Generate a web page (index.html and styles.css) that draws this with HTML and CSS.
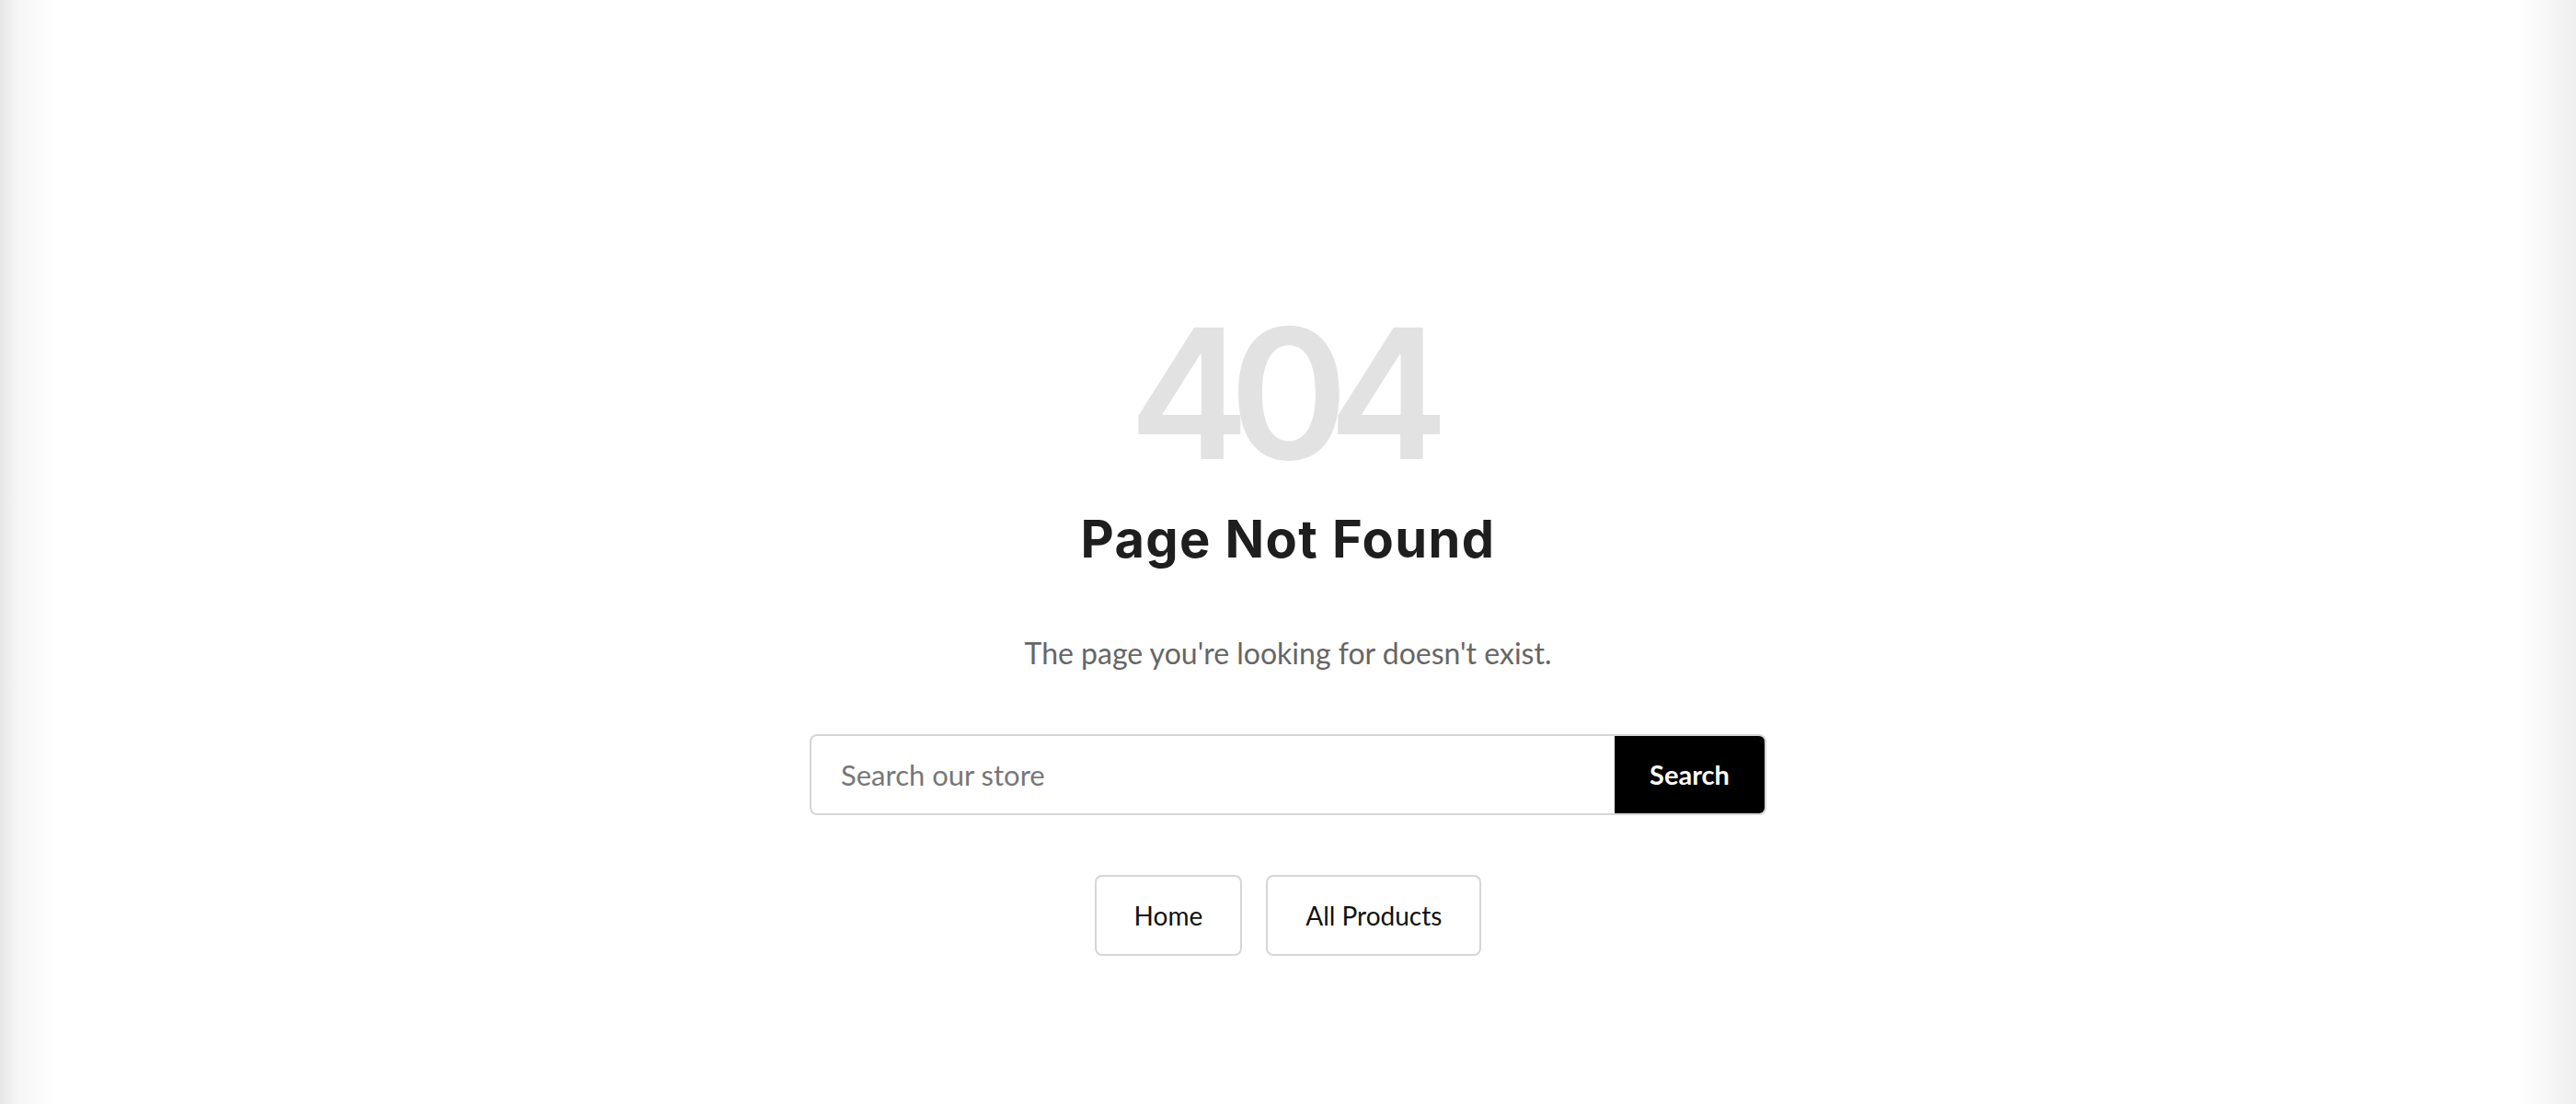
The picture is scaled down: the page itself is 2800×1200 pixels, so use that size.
FILE: index.html
```html
<!DOCTYPE html>
<html lang="en">
<head>
<meta charset="utf-8">
<title>Page Not Found</title>
<link rel="stylesheet" href="styles.css">
</head>
<body>
<main class="page">
  <div class="notfound">
    <div class="code">404</div>
    <h1 class="title">Page Not Found</h1>
    <p class="message">The page you're looking for doesn't exist.</p>
    <form class="search" action="#">
      <input class="search-input" type="text" placeholder="Search our store">
      <button class="search-btn" type="button">Search</button>
    </form>
    <div class="links">
      <a class="link-btn" href="#">Home</a>
      <a class="link-btn" href="#">All Products</a>
    </div>
  </div>
</main>
</body>
</html>
```

FILE: styles.css
```css
html, body {
  margin: 0;
  padding: 0;
}
body {
  min-height: 100vh;
  font-family: Lato, "Liberation Sans", sans-serif;
  background: linear-gradient(to right, #e6e6e6 0px, #f6f6f6 20px, #ffffff 62px, #ffffff calc(100% - 62px), #f6f6f6 calc(100% - 30px), #efefef 100%);
}
.page {
  display: flex;
  justify-content: center;
  padding-top: 330px;
}
.notfound {
  display: flex;
  flex-direction: column;
  align-items: center;
  width: 1040px;
}
.code {
  font-family: Inter, "Noto Sans", sans-serif;
  font-weight: 600;
  font-size: 196px;
  line-height: 1;
  letter-spacing: -0.11em;
  color: #e2e2e2;
  margin-right: 0.1em;
}
.title {
  font-family: Inter, "Noto Sans", sans-serif;
  font-weight: 700;
  font-size: 56px;
  line-height: 1.2;
  color: #1e1e1e;
  margin: 27px 0 0;
  letter-spacing: 0.025em;
}
.message {
  font-size: 32px;
  line-height: 1.3;
  color: #666666;
  margin: 69px 0 0;
}
.search {
  display: flex;
  width: 1040px;
  height: 88px;
  margin-top: 67px;
  box-sizing: border-box;
}
.search-input {
  flex: 1;
  min-width: 0;
  box-sizing: border-box;
  border: 2px solid #d6d6d6;
  border-right: none;
  border-radius: 8px 0 0 8px;
  padding: 0 32px;
  font-family: Lato, "Liberation Sans", sans-serif;
  font-size: 31px;
  color: #333;
  outline: none;
  background: #fff;
}
.search-input::placeholder {
  color: #777777;
}
.search-btn {
  width: 165px;
  box-sizing: border-box;
  border: 2px solid #d6d6d6;
  border-left: none;
  border-radius: 0 8px 8px 0;
  background: #000;
  color: #fff;
  font-family: Lato, "Liberation Sans", sans-serif;
  font-weight: 700;
  font-size: 29px;
  padding: 0;
  cursor: pointer;
}
.links {
  display: flex;
  gap: 26px;
  margin-top: 65px;
}
.link-btn {
  display: flex;
  align-items: center;
  justify-content: center;
  height: 88px;
  box-sizing: border-box;
  padding: 0 41px;
  border: 2px solid #d6d6d6;
  border-radius: 8px;
  color: #111;
  text-decoration: none;
  font-size: 28px;
  background: #fff;
}
```
